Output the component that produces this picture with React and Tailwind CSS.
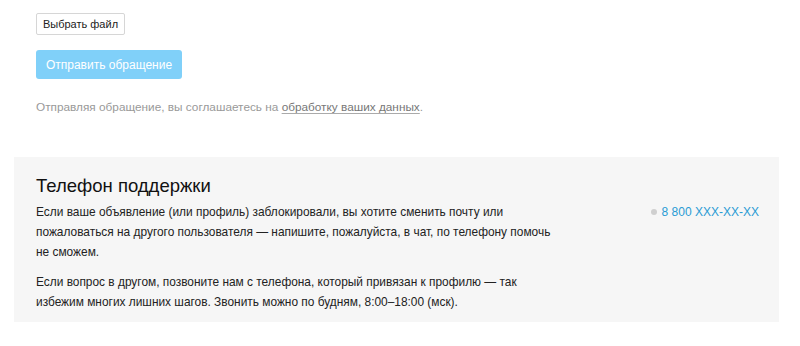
import React from 'react';

const App = () => {
    return (
        <div className="w-[800px] h-[346px] bg-white text-[12px] text-[#333] font-['Liberation_Sans',Arial,sans-serif]">
            <div className="px-9 pt-[13px]">
                <button className="h-[22px] w-[89px] border border-[#d6d6d6] rounded-[2px] bg-white text-[11px] text-[#222] leading-none">
                    Выбрать файл
                </button>
                <div className="mt-[15px]">
                    <button className="h-[29px] w-[146px] rounded-[3px] bg-[#80d0f9] text-white text-[12px] leading-none">
                        Отправить обращение
                    </button>
                </div>
                <p className="mt-[18px] leading-5 text-[#999] text-[11.8px]">
                    Отправляя обращение, вы соглашаетесь на{' '}
                    <a className="text-[#777] underline underline-offset-2 decoration-[#aaa]">обработку ваших данных</a>.
                </p>
            </div>

            {/* Телефон поддержки */}
            <div className="mx-[14px] mt-[40px] w-[765px] bg-[#f6f6f6] pl-[22px] pr-5 pt-[17px] pb-[10px]">
                <h3 className="text-[18.5px] leading-6 text-[#111] mb-1">Телефон поддержки</h3>
                <div className="flex justify-between">
                    <div className="w-[520px] leading-5 text-[#222] text-[11.9px]">
                        <p>
                            Если ваше объявление (или профиль) заблокировали, вы хотите сменить почту или пожаловаться на другого пользователя — напишите, пожалуйста, в чат, по телефону помочь не сможем.
                        </p>
                        <p className="mt-[10px]">
                            Если вопрос в другом, позвоните нам с телефона, который привязан к профилю — так избежим многих лишних шагов. Звонить можно по будням, 8:00–18:00 (мск).
                        </p>
                    </div>
                    <div className="flex items-center h-5 gap-[5px]">
                        <span className="w-[6px] h-[6px] rounded-full bg-[#cfcfcf]"></span>
                        <span className="text-[#2a9bd4]">8 800 XXX-XX-XX</span>
                    </div>
                </div>
            </div>
        </div>
    );
};

export default App;
